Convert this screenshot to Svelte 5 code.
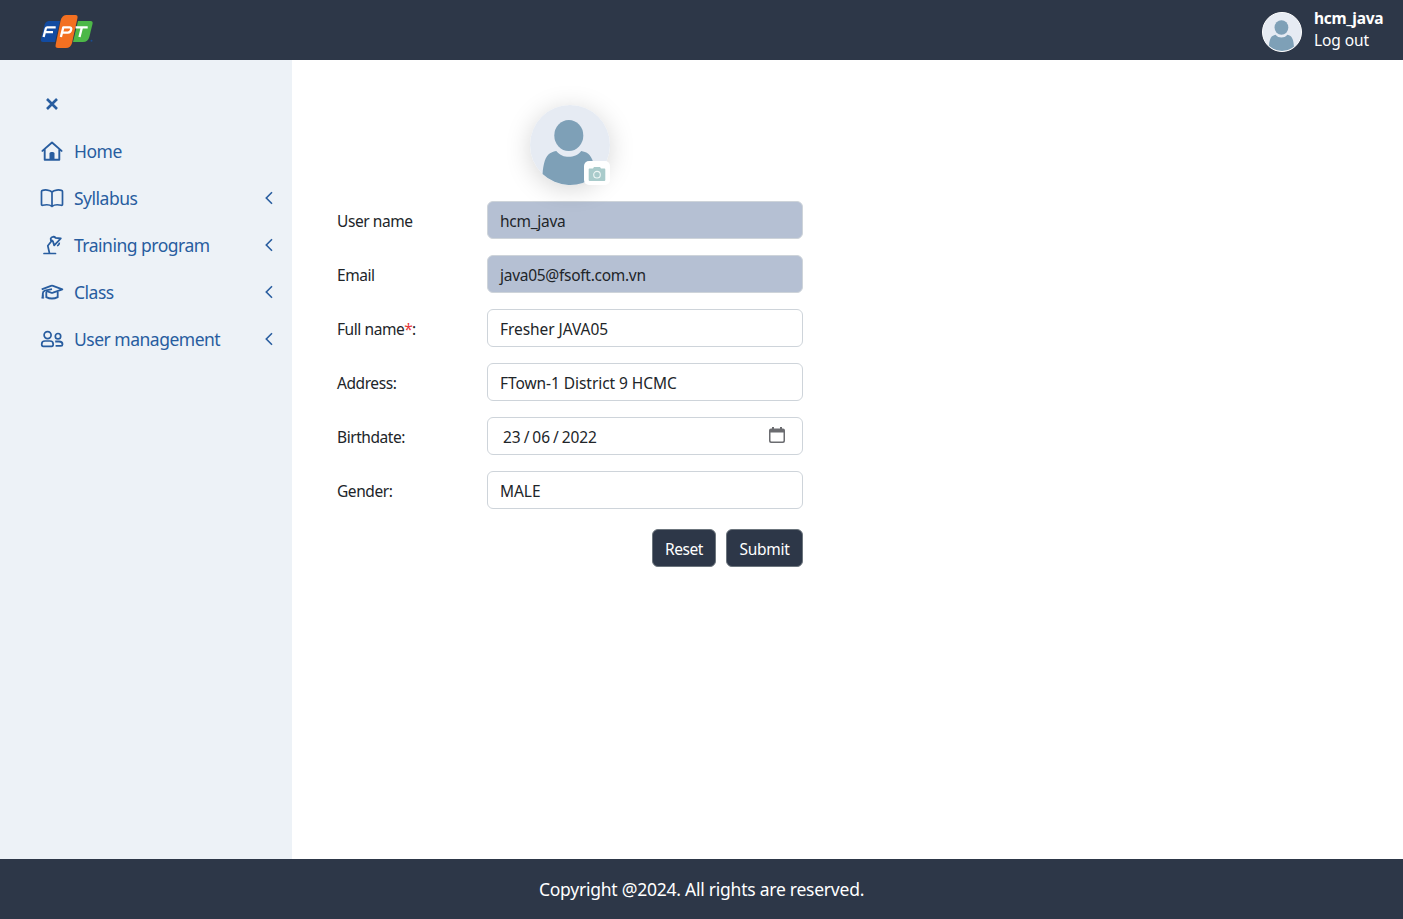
<script>
  const menu = [
    { icon: 'home', label: 'Home', more: false },
    { icon: 'book', label: 'Syllabus', more: true },
    { icon: 'lamp', label: 'Training program', more: true },
    { icon: 'cap', label: 'Class', more: true },
    { icon: 'users', label: 'User management', more: true },
  ];
  const fields = [
    { label: 'User name', value: 'hcm_java', locked: true },
    { label: 'Email', value: 'java05@fsoft.com.vn', locked: true },
    { label: 'Full name', required: true, value: 'Fresher JAVA05' },
    { label: 'Address:', value: 'FTown-1 District 9 HCMC' },
    { label: 'Birthdate:', date: ['23', '06', '2022'] },
    { label: 'Gender:', value: 'MALE' },
  ];
</script>

{#snippet person()}
  <svg class="person" viewBox="0 0 80 80">
    <circle cx="40" cy="40" r="40" fill="#e6ebf3" />
    <path d="M12.600 69C13.200 59 15.500 51 20 48.300C22 47 24.500 46.400 26.300 46C30 50.500 34 51.800 38.800 51.800C43.500 51.800 48 50.300 51.200 46C53.500 46.500 56.500 47.200 58.500 49C62.500 53 64.600 59 65.200 71.100A40 40 0 0 1 12.600 69Z" fill="#7ea0b7" />
    <ellipse cx="38.800" cy="30.500" rx="14.500" ry="15.500" fill="#7ea0b7" />
  </svg>
{/snippet}

<div class="page">
  <header>
    <svg class="logo" viewBox="0 0 54 34" role="img" aria-label="FPT">
      <path d="M8.500 6H20L15 27H3Q0.300 27 1 24L4.500 10Q5.500 6.600 8.500 6Z" fill="#124ba1" />
      <path d="M38 6H50.500Q53.200 6 52.500 9L49.300 22Q48 27 43 27H33Z" fill="#4db848" />
      <path d="M26 0H35.500Q38 0 37.500 3L32 28Q30.700 33 26 33H18Q15 33 15.600 30L20.500 6Q21.800 0.500 26 0Z" fill="#f37021" />
      <g fill="none" stroke="#fff" stroke-width="2.300" stroke-linejoin="round">
        <path d="M3.600 22L5.900 13.300Q6.200 12.400 7.200 12.400H15.700M4.800 17.200H13" />
        <path d="M20.900 22L23.300 12.400H29.500Q31.700 12.400 31.200 14.600Q30.500 17.600 27.900 17.600H22" />
        <path d="M35.600 12.400H47.700M41.900 12.400L39.500 22" />
      </g>
      <circle cx="51.500" cy="25.700" r="1" fill="#1a4c90" />
    </svg>
    <div class="account">
      <div class="small-avatar">{@render person()}</div>
      <div class="who">
        <strong>hcm_java</strong>
        <span>Log out</span>
      </div>
    </div>
  </header>

  <div class="body">
    <nav>
      <div class="row close">
        <svg viewBox="0 0 24 24"><path d="M7 7L17 17M17 7L7 17" stroke-width="2.600" /></svg>
      </div>
      {#each menu as item}
        <div class="row">
          <svg viewBox="0 0 24 24">
            {#if item.icon === 'home'}
              <path d="M2.400 11.900L12 3.500L21.600 11.900M4.700 10V20.800H19.300V10" stroke-width="1.900" stroke-linecap="round" stroke-linejoin="round" />
              <path d="M9.500 20.800V14.600Q9.500 13 11.100 13H12.900Q14.500 13 14.500 14.600V20.800Z" fill="currentColor" stroke="none" />
            {:else if item.icon === 'book'}
              <path d="M12 6C9.500 3.800 5 3.500 2.500 4.400Q1.500 4.700 1.500 5.500V18.300Q1.500 19.600 2.700 19.300C5.500 18.600 9.500 18.400 12 20.400C14.500 18.400 18.500 18.600 21.300 19.300Q22.500 19.600 22.500 18.300V5.500Q22.500 4.700 21.500 4.400C19 3.500 14.500 3.800 12 6ZM12 6V20" stroke-width="1.700" />
            {:else if item.icon === 'lamp'}
              <path d="M4 20.500H15.500M9.500 20.300L7.800 12.800L12 7.500" stroke-width="1.700" stroke-linecap="round" stroke-linejoin="round" />
              <path d="M10.700 5.500C11.500 3.600 14.200 3.100 15.600 4.900L20.800 5.500L14.200 12.400L13 8.400L10.900 7.400Z" stroke-width="1.800" stroke-linejoin="round" />
              <path d="M17 12.700Q19.400 12.200 19.300 9.600" stroke-width="1.600" />
            {:else if item.icon === 'cap'}
              <path d="M1.700 9.300L11 5.800Q12 5.500 13 5.800L22.400 9.300L13 12.700Q12 13 11 12.700L6.200 11" stroke-width="1.800" stroke-linejoin="round" />
              <path d="M12 9.200L5 10.500Q2.800 11.500 2.800 13.500V16.500M6.300 12V17.100Q9 18.500 12 18.500T17.700 17.100V12" stroke-width="1.800" />
              <path d="M2.700 13.500L1.700 18.200H3.900Z" fill="currentColor" stroke-width="0.600" />
            {:else}
              <circle cx="7.600" cy="8.100" r="3.500" stroke-width="1.700" />
              <circle cx="18" cy="9.200" r="2.700" stroke-width="1.700" />
              <path d="M1.700 17.300Q1.700 14 4.900 14H10Q13.200 14 13.200 17.300Q13.200 19.300 11.700 19.300H3.200Q1.700 19.300 1.700 17.300Z" stroke-width="1.700" />
              <path d="M15.200 14.500H19Q22.500 14.500 22.500 17.300Q22.500 18.900 21 18.900H15.600" stroke-width="1.800" />
            {/if}
          </svg>
          <span>{item.label}</span>
          {#if item.more}
            <svg class="chevron" viewBox="0 0 8 14"><path d="M7 1.300L1.300 7L7 12.700" stroke-width="1.600" /></svg>
          {/if}
        </div>
      {/each}
    </nav>

    <main>
      <div class="avatar">
        {@render person()}
        <div class="camera">
          <svg viewBox="0 0 18 16">
            <path d="M1.500 2.500H5L6 1H12L13 2.500H16.500Q17.300 2.500 17.300 3.500V14Q17.300 15 16.300 15H1.700Q0.700 15 0.700 14V3.300Q0.700 2.500 1.500 2.500Z" fill="#a9cbcb" />
            <circle cx="9" cy="8.700" r="3.300" fill="none" stroke="#eef6f5" stroke-width="1.100" />
          </svg>
        </div>
      </div>

      <form onsubmit={(e) => e.preventDefault()}>
        {#each fields as f}
          <div class="field">
            <div class="label">{f.label}{#if f.required}<i>*</i>:{/if}</div>
            <div class="input" class:locked={f.locked}>
              {#if f.date}
                <div class="date"><span>{f.date[0]}</span><span>/</span><span>{f.date[1]}</span><span>/</span><span>{f.date[2]}</span></div>
                <svg viewBox="0 0 16 16">
                  <path d="M3 0H5V1.500H11V0H13V1.500H14Q16 1.500 16 3.500V14Q16 16 14 16H2Q0 16 0 14V3.500Q0 1.500 2 1.500H3ZM1.500 5.500V13.500Q1.500 14.500 2.500 14.500H13.500Q14.500 14.500 14.500 13.500V5.500Z" fill="#6b6c70" fill-rule="evenodd" />
                </svg>
              {:else}
                <span>{f.value}</span>
              {/if}
            </div>
          </div>
        {/each}
        <div class="actions">
          <button type="reset">Reset</button>
          <button type="submit">Submit</button>
        </div>
      </form>
    </main>
  </div>

  <footer>Copyright @2024. All rights are reserved.</footer>
</div>

<style>
  :global(body) { background: #fff; }
  .page {
    height: 919px;
    display: flex;
    flex-direction: column;
    font-family: "Noto Sans", "Open Sans", sans-serif;
    font-size: 15.5px;
    letter-spacing: -0.43px;
    color: #212529;
    overflow: hidden;
  }
  header {
    height: 60px;
    flex: none;
    box-sizing: border-box;
    padding: 0 20px 0 40px;
    background: #2d3748;
    color: #fff;
    display: flex;
    justify-content: space-between;
    align-items: center;
  }
  .logo { width: 54px; height: 34px; margin-top: 3px; }
  .account { display: flex; gap: 12px; align-items: center; }
  .small-avatar {
    width: 38px;
    height: 38px;
    border: 1px solid #fff;
    border-radius: 50%;
    margin-top: 4px;
    background: #e6ebf3;
    overflow: hidden;
  }
  .person { display: block; width: 100%; height: 100%; }
  .who {
    display: flex;
    flex-direction: column;
    line-height: 22px;
    width: 69px;
    padding-bottom: 2px;
    white-space: nowrap;
    letter-spacing: -0.08px;
  }
  .who strong { letter-spacing: -0.3px; }
  .body { flex: 1; display: flex; min-height: 0; }
  nav {
    width: 292px;
    box-sizing: border-box;
    flex: none;
    background: #edf2f7;
    color: #285d9f;
    padding: 20px 19px 0 40px;
    font-size: 17.5px;
    letter-spacing: -0.5px;
  }
  .row { height: 47px; display: flex; align-items: center; }
  .row svg { width: 24px; height: 24px; fill: none; stroke: currentColor; flex: none; }
  .row span { margin-left: 10px; padding-top: 1px; flex: 1; white-space: nowrap; }
  .row .chevron { width: 8px; height: 14px; }
  main { padding: 45px 0 0 45px; }
  .avatar {
    position: relative;
    width: 80px;
    height: 80px;
    margin-left: 193px;
    border-radius: 50%;
    box-shadow: 0 4px 26px rgba(0, 0, 0, 0.17);
  }
  .camera {
    position: absolute;
    right: 0;
    bottom: 0;
    width: 26px;
    height: 24px;
    border-radius: 5px;
    background: #fff;
    display: flex;
    align-items: center;
    justify-content: center;
  }
  .camera svg { width: 18px; height: 16px; margin-top: 2px; }
  form { width: 466px; margin-top: 16px; }
  .field { display: flex; height: 38px; margin-bottom: 16px; }
  .label { width: 150px; line-height: 40px; flex: none; }
  .label i { color: #e5383b; font-style: normal; letter-spacing: -0.9px; }
  .input {
    flex: 1;
    box-sizing: border-box;
    height: 38px;
    padding: 0 17px 0 12px;
    border: 1px solid #ced4da;
    border-radius: 6px;
    line-height: 38px;
    display: flex;
    justify-content: space-between;
    align-items: center;
    white-space: nowrap;
    letter-spacing: -0.06px;
  }
  .input > span, .date { padding-top: 2px; }
  .input.locked { background: #b5c0d3; letter-spacing: -0.28px; }
  .input svg { width: 16px; height: 16px; margin-bottom: 2px; }
  .date { display: flex; gap: 3px; padding-left: 3px; }
  .actions { display: flex; justify-content: flex-end; gap: 10px; margin-top: 20px; }
  button {
    height: 38px;
    padding: 2px 0 0;
    width: 64px;
    border: 1px solid #6c757d;
    border-radius: 6px;
    background: #2d3748;
    color: #fff;
    font: inherit;
    letter-spacing: -0.4px;
  }
  button[type="submit"] { width: 77px; letter-spacing: -0.25px; }
  footer {
    height: 60px;
    flex: none;
    background: #2d3748;
    color: #fff;
    text-align: center;
    line-height: 61px;
    font-size: 17.5px;
    letter-spacing: -0.24px;
  }
</style>
